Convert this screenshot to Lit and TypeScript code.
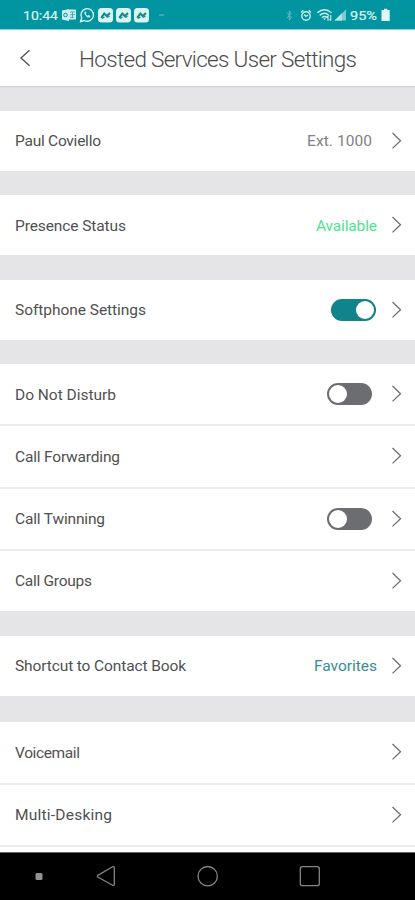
import { LitElement, html, css, svg, nothing } from "lit";
import { customElement, property } from "lit/decorators.js";
import { classMap } from "lit/directives/class-map.js";

interface Row {
  label: string;
  width: number;
  height: number;
  value?: string;
  valueWidth?: number;
  tone?: string;
  toggle?: boolean;
}

const groups: Row[][] = [
  [{ label: "Paul Coviello", width: 86, height: 60, value: "Ext. 1000", valueWidth: 65, tone: "grey" }],
  [{ label: "Presence Status", width: 111, height: 60, value: "Available", valueWidth: 61, tone: "green" }],
  [{ label: "Softphone Settings", width: 131, height: 60, toggle: true }],
  [
    { label: "Do Not Disturb", width: 101, height: 60, toggle: false },
    { label: "Call Forwarding", width: 105, height: 60.5 },
    { label: "Call Twinning", width: 90, height: 60, toggle: false },
    { label: "Call Groups", width: 77, height: 60.5 },
  ],
  [{ label: "Shortcut to Contact Book", width: 171, height: 60, value: "Favorites", valueWidth: 63, tone: "teal" }],
  [
    { label: "Voicemail", width: 65, height: 60.5 },
    { label: "Multi-Desking", width: 97, height: 60.5 },
    { label: "", width: 0, height: 5 },
  ],
];

/** Text whose tracking is adjusted so that it spans a given width. */
@customElement("fit-text")
class FitText extends LitElement {
  @property() text = "";
  @property({ type: Number }) width = 0;
  static styles = css`
    :host { display: block; white-space: nowrap; }
    span { display: inline-block; }
  `;
  updated() {
    const span = this.renderRoot.querySelector("span")!;
    span.style.letterSpacing = "0";
    const natural = span.getBoundingClientRect().width;
    const step = (this.width - natural) / Math.max(1, this.text.length - 1);
    span.style.letterSpacing = `${step}px`;
    span.style.marginRight = `${-step}px`;
  }
  render() {
    return html`<span>${this.text}</span>`;
  }
}

@customElement("status-bar")
class StatusBar extends LitElement {
  static styles = css`
    :host { display: block; height: 30px; background: #0095a0; border-bottom: 1px solid #8ccdd1; box-sizing: border-box; }
    svg { display: block; }
    text { font-family: Roboto, "Noto Sans", sans-serif; font-size: 13.5px; fill: #dcf4f5; stroke: #dcf4f5; stroke-width: 0.2px; }
  `;
  chat(x: number) {
    return svg`<g transform="translate(${x} 8)">
      <rect width="15" height="14.5" rx="3.5" fill="#d8f4f3"/>
      <path d="M3.2 9.8 6.3 5.6 8.8 8 12 5" fill="none" stroke="#16868d" stroke-width="2"/>
      <path d="M4 10.5 6.5 9M9 9.3 11.5 8" stroke="#16868d" stroke-width="1.3"/>
    </g>`;
  }
  render() {
    return html`<svg width="415" height="29" viewBox="0 0 415 29">
      <text x="23" y="20.3" textLength="35" lengthAdjust="spacingAndGlyphs">10:44</text>
      <g fill="#cdeff0">
        <path d="M62 10.5 69 9v12l-7-1.5z"/>
        <path d="M69 9.5h7v10h-7z"/>
      </g>
      <circle cx="65.5" cy="15" r="1.8" fill="none" stroke="#0095a0"/>
      <path d="M70 12h5M70 14.7h5M70 17.3h4M72.5 12v6" stroke="#3aa9b1" stroke-width=".9"/>
      <path d="M80.6 21.6 81.7 18A6.3 6.3 0 1 1 84.2 20.5z" fill="none" stroke="#d5f2f3" stroke-width="1.4"/>
      <path d="M84.7 11.8c-1 1 0 2.7 1.3 4.1s3 2.2 4 1.1l.3-1-1.8-1-.8.8c-1-.4-1.7-1.1-2.1-2l.7-.8-.8-1.5z" fill="#d5f2f3"/>
      ${this.chat(98)}${this.chat(116)}${this.chat(134)}
      <path d="M159 15h5" stroke="#41aeb6" stroke-width="1.8"/>
      <path d="M287 12.5 291.500 17.500l-2.200 2.500v-9l2.200 2.200-4.500 4.800" fill="none" stroke="#62bdc4"/>
      <g fill="none" stroke="#c8eced" stroke-width="1.4">
        <circle cx="306" cy="16" r="4.2"/>
        <path d="M301.2 12.5 303.3 10.3M308.7 10.3 310.8 12.5M304.2 14.5 306 16.4 308 15"/>
        <path d="M317.3 12.8Q324.5 6.5 331.5 12.8M319.7 15.4Q324.5 11.2 329 15.4M322 17.5Q324.5 15.4 326.8 17.5"/>
        <path d="M328 16v5M326.5 17.5 328 16M330.8 15v5.5M329.5 19 330.8 20.6" stroke-width="1.1"/>
      </g>
      <path d="M323.2 18.2h2.6l-1.3 2z" fill="#c8eced"/>
      <path d="M334.5 20.5 346 9.5v11z" fill="#7ecbd0"/>
      <path d="M334.5 20.5 342 13.3v7.2z" fill="#b5e4e6"/>
      <text x="350" y="20.3" textLength="27" lengthAdjust="spacingAndGlyphs">95%</text>
      <path d="M381.500 10h2.500V8.800h3.200V10h2.500v11h-8.200z" fill="#dff7f7"/>
    </svg>`;
  }
}

@customElement("nav-bar")
class NavBar extends LitElement {
  static styles = css`
    :host { display: block; height: 48px; background: #000; border-top: 1px solid #666; box-sizing: border-box; }
    svg { display: block; }
  `;
  render() {
    return html`<svg width="415" height="47" viewBox="0 853 415 47" fill="none" stroke="#858585" stroke-width="1.3">
      <rect x="35.5" y="873" width="7" height="7" rx="1.5" fill="#929292" stroke="none"/>
      <path d="M97.8 875.4 112.5 866.8Q114.3 866 114.3 867.8V884.2Q114.3 886 112.5 885.2L97.8 877Q96.8 876.2 97.8 875.4z"/>
      <circle cx="207.7" cy="876.2" r="9.7"/>
      <rect x="300.3" y="866.7" width="19" height="19" rx="2.2"/>
    </svg>`;
  }
}

@customElement("settings-row")
class SettingsRow extends LitElement {
  @property({ attribute: false }) row!: Row;
  static styles = css`
    :host { display: block; }
    .row { display: flex; align-items: center; height: 100%; padding: 0 13px 0 15px; font: 15.5px/20px Roboto, "Open Sans", sans-serif; color: #505050; }
    fit-text { padding-top: 1px; }
    .label { flex: 1; }
    .value { margin-right: 14px; }
    .grey { color: #818181; margin-right: 19px; }
    .green { color: #4be591; }
    .teal { color: #398c90; }
    .toggle { display: flex; align-items: center; width: 45px; height: 22px; padding: 0 2px; border-radius: 11px; box-sizing: border-box; background: #6c6d70; margin-right: 19px; }
    .toggle.on { justify-content: flex-end; background: #11838a; margin-right: 15px; }
    .knob { width: 18px; height: 18px; border-radius: 50%; background: #fff; }
    svg { display: block; }
  `;
  render() {
    const r = this.row;
    if (!r.label) return nothing;
    return html`<div class="row">
      <fit-text class="label" .text=${r.label} .width=${r.width}></fit-text>
      ${r.value ? html`<fit-text class="value ${r.tone}" .text=${r.value} .width=${r.valueWidth}></fit-text>` : nothing}
      ${r.toggle !== undefined
        ? html`<div class=${classMap({ toggle: true, on: r.toggle })}><div class="knob"></div></div>`
        : nothing}
      <svg width="11" height="18" viewBox="0 0 11 18"><path d="M1.5 1 9.5 8.7 1.5 16.4" fill="none" stroke="#6e6e6e" stroke-width="1.3"/></svg>
    </div>`;
  }
}

@customElement("app-root")
class AppRoot extends LitElement {
  static styles = css`
    :host { display: flex; flex-direction: column; width: 415px; height: 900px; overflow: hidden; background: #fff; }
    header { display: flex; align-items: center; height: 56px; padding-left: 19px; box-sizing: border-box; background: #fff; }
    header svg { display: block; margin-right: 48px; }
    .title { font: 300 22.5px/30px Roboto, "Open Sans", sans-serif; color: #4c4c4c; padding-top: 2px; }
    main { flex: 1; display: flex; flex-direction: column; gap: 24.5px; padding-top: 24.5px; background: #e5e5e7; box-shadow: inset 0 2px 1px -1px #cfcfcf; overflow: hidden; }
    section { display: flex; flex-direction: column; gap: 2px; background: #ececee; flex: none; }
    section:last-child { margin-top: 2px; }
    settings-row { background: #fff; }
  `;
  render() {
    return html`
      <status-bar></status-bar>
      <header>
        <svg width="12" height="18" viewBox="0 0 12 18"><path d="M10.5 1.2 2 9 10.5 16.8" fill="none" stroke="#555" stroke-width="1.4"/></svg>
        <fit-text class="title" .text=${"Hosted Services User Settings"} .width=${278}></fit-text>
      </header>
      <main>
        ${groups.map(
          (g) => html`<section>
            ${g.map((r) => html`<settings-row style="height:${r.height}px" .row=${r}></settings-row>`)}
          </section>`
        )}
      </main>
      <nav-bar></nav-bar>
    `;
  }
}
